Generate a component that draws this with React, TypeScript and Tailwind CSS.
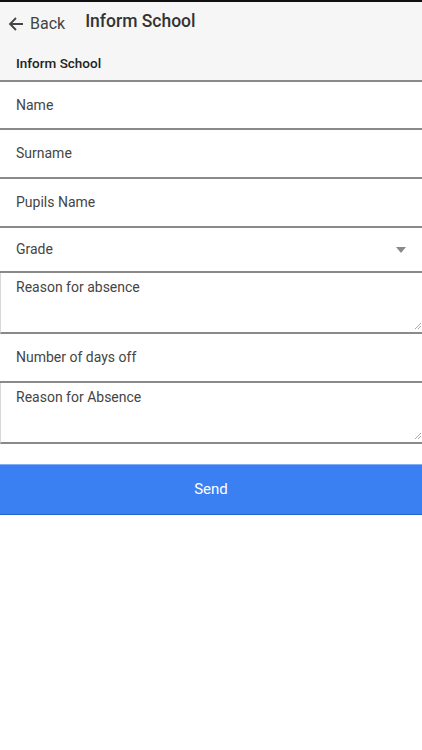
import React from "react";

function Field({ label, h }: { label: string; h: string }) {
  return (
    <div className={`${h} flex items-center px-4 border-b-2 border-[#8a8a8a] text-[14px] text-[#454545]`}>
      {label}
    </div>
  );
}

function Area({ label }: { label: string }) {
  return (
    <div className="relative h-[61px] border-b-2 border-l border-[#8a8a8a] border-l-[#d8d8d8] pl-[15px] pt-[4px] text-[14px] text-[#454545]">
      {label}
      <svg className="absolute right-[1px] bottom-[3px]" width="6" height="6" viewBox="0 0 6 6">
        <path d="M6 0 L0 6 M6 3 L3 6" stroke="#aaa" strokeWidth="1" />
      </svg>
    </div>
  );
}

export default function App() {
  return (
    <div className="w-[422px] h-[750px] bg-white" style={{ fontFamily: "Roboto, 'Liberation Sans', sans-serif" }}>
      <div className="bg-[#f6f6f6] border-t-2 border-[#111] h-[80px]">
        <div className="flex items-center h-[44px]">
          <div className="flex items-center pl-[8px] text-[16px] text-[#444]">
            <svg width="16" height="16" viewBox="0 0 16 16" className="mr-[6px]">
              <path d="M15 8 H2 M8 2 L2 8 L8 14" stroke="#444" strokeWidth="1.8" fill="none" />
            </svg>
            Back
          </div>
          <div className="ml-[20px] text-[17.5px] font-medium text-[#333] -mt-[6px]">Inform School</div>
        </div>
        <div className="pl-4 mt-[7px] text-[13.5px] font-medium text-[#222]">Inform School</div>
      </div>
      <div className="border-t-2 border-[#8a8a8a]" />
      <Field label="Name" h="h-[48px]" />
      <Field label="Surname" h="h-[49px]" />
      <Field label="Pupils Name" h="h-[49px]" />
      <div className="h-[45px] flex items-center justify-between pl-4 pr-[16px] border-b-2 border-[#8a8a8a] text-[14px] text-[#454545]">
        Grade
        <svg width="10" height="6" viewBox="0 0 10 6">
          <path d="M0 0 H10 L5 6 Z" fill="#8a8a8a" />
        </svg>
      </div>
      <Area label="Reason for absence" />
      <Field label="Number of days off" h="h-[49px]" />
      <Area label="Reason for Absence" />
      <div className="mt-[20px] h-[51px] bg-[#3b80f3] border-t border-[#82aef5] border-b border-b-[#2a65c9] flex items-center justify-center text-white text-[15px]">
        Send
      </div>
    </div>
  );
}
